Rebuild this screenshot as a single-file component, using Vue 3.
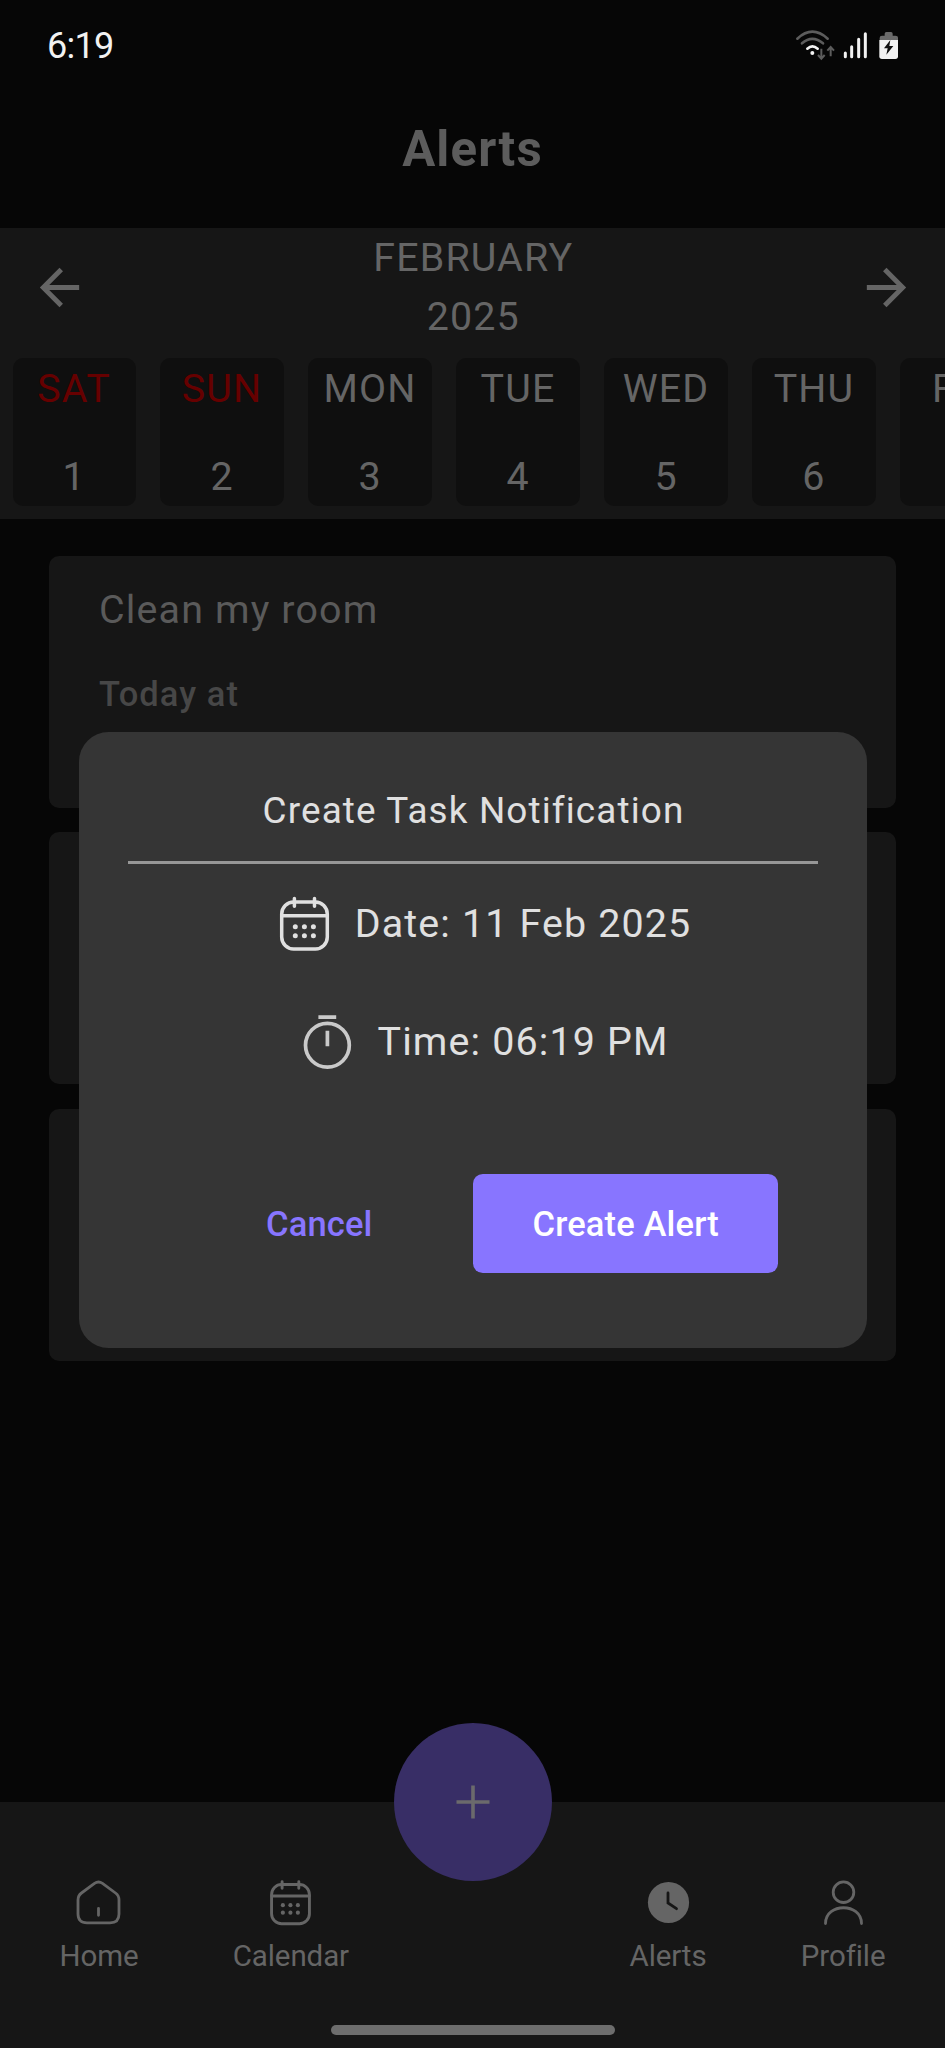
<script setup>
const days = [
  { name: 'SAT', num: 1, weekend: true },
  { name: 'SUN', num: 2, weekend: true },
  { name: 'MON', num: 3 },
  { name: 'TUE', num: 4 },
  { name: 'WED', num: 5 },
  { name: 'THU', num: 6 },
  { name: 'FRI', num: 7 },
]
const tasks = [{ title: 'Clean my room', when: 'Today at' }, {}, {}]
</script>

<template>
  <div class="screen">
    <header class="status">
      <span class="clock">6:19</span>
      <svg class="status-icons" viewBox="0 0 420 180" fill="none">
        <g stroke-linecap="round" stroke-width="8">
          <path d="M52 71Q97 29 143 71" stroke="#5c5c5c" />
          <path d="M66 85Q97 58 129 85" stroke="#5c5c5c" />
          <path d="M82 101Q97 87 113 101" stroke="#f2f2f2" />
        </g>
        <circle cx="97" cy="114" r="6" fill="#f2f2f2" />
        <path d="M124 101V129M114 120L124 131L134 120M152 124V97M142 107L152 96L162 107" stroke="#5c5c5c" stroke-width="6" />
        <path d="M196 114V125M215 95V125M236 73V125M256 56V125" stroke="#f2f2f2" stroke-width="9" stroke-linecap="round" />
        <path d="M299 75V69Q299 62 306 62H314V56Q314 51 319 51H333Q338 51 338 56V62H346Q354 62 354 69V75Z" fill="#6a6a6a" />
        <path d="M298 75H354V124Q354 132 346 132H306Q298 132 298 124Z" fill="#f2f2f2" />
        <path d="M331 75L312 100H323L319 119L340 93H328Z" fill="#111" />
      </svg>
    </header>
    <h1 class="title">Alerts</h1>

    <section class="calendar">
      <div class="month-row">
        <svg class="arrow" viewBox="0 0 24 24"><path d="M20 11H7.83l5.59-5.59L12 4l-8 8 8 8 1.41-1.41L7.83 13H20v-2z" /></svg>
        <div class="month"><div>FEBRUARY</div><div>2025</div></div>
        <svg class="arrow" viewBox="0 0 24 24"><path d="M12 4l-1.41 1.41L16.17 11H4v2h12.17l-5.58 5.59L12 20l8-8z" /></svg>
      </div>
      <div class="days">
        <div v-for="d in days" :key="d.num" class="day">
          <span class="day-name" :class="{ weekend: d.weekend }">{{ d.name }}</span>
          <span>{{ d.num }}</span>
        </div>
      </div>
    </section>

    <main class="tasks">
      <article v-for="(t, i) in tasks" :key="i" class="task">
        <div class="task-title">{{ t.title }}</div>
        <div class="task-when">{{ t.when }}</div>
      </article>
    </main>

    <nav class="nav">
      <div class="item">
        <svg class="icon" viewBox="0 0 49 49">
          <path d="M4 22Q4 17.5 7.5 15L20.5 5.3Q24.5 2.7 28.5 5.3L41.5 15Q45 17.5 45 22V36Q45 44.8 36 44.8H13Q4 44.8 4 36ZM24.5 30.3V37.3" />
        </svg>
        <span>Home</span>
      </div>
      <div class="item">
        <svg class="icon cal" viewBox="0 0 59 59">
          <rect x="6.7" y="7.9" width="45.6" height="47.1" rx="12" />
          <path d="M7 21.7H52M19.4 4.6V12.3M39.5 4.6V12.3" />
          <g class="dots">
            <circle cx="20.3" cy="32.7" r="2.5" /><circle cx="29.4" cy="32.7" r="2.5" /><circle cx="38.4" cy="32.7" r="2.5" />
            <circle cx="20.3" cy="41.7" r="2.5" /><circle cx="29.4" cy="41.7" r="2.5" /><circle cx="38.4" cy="41.7" r="2.5" />
          </g>
        </svg>
        <span>Calendar</span>
      </div>
      <div class="spacer"></div>
      <div class="item">
        <svg class="icon" viewBox="0 0 49 49">
          <circle class="disc" cx="24.5" cy="24.5" r="20.6" />
          <path class="hands" d="M24 15V25L32.5 30.7" />
        </svg>
        <span>Alerts</span>
      </div>
      <div class="item">
        <svg class="icon" viewBox="0 0 49 49">
          <circle cx="24.5" cy="14.2" r="10.3" />
          <path d="M6.5 45.5C6.5 24.5 42.5 24.5 42.5 45.5" />
        </svg>
        <span>Profile</span>
      </div>
      <button class="fab">
        <svg viewBox="0 0 34 34"><path d="M17 .5V33.5M.5 17H33.5" /></svg>
      </button>
      <div class="handle"></div>
    </nav>

    <div class="dialog">
      <h2>Create Task Notification</h2>
      <div class="rule"></div>
      <div class="field">
        <svg class="icon cal" viewBox="0 0 59 59">
          <rect x="6.7" y="7.9" width="45.6" height="47.1" rx="12" />
          <path d="M7 21.7H52M19.4 4.6V12.3M39.5 4.6V12.3" />
          <g class="dots">
            <circle cx="20.3" cy="32.7" r="2.5" /><circle cx="29.4" cy="32.7" r="2.5" /><circle cx="38.4" cy="32.7" r="2.5" />
            <circle cx="20.3" cy="41.7" r="2.5" /><circle cx="29.4" cy="41.7" r="2.5" /><circle cx="38.4" cy="41.7" r="2.5" />
          </g>
        </svg>
        <span>Date: 11 Feb 2025</span>
      </div>
      <div class="field time">
        <svg class="icon timer" viewBox="0 0 59 59">
          <circle cx="29.4" cy="33.2" r="21.9" />
          <path d="M20.4 5.1H38.2M29.4 18.8V34.2" />
        </svg>
        <span>Time: 06:19 PM</span>
      </div>
      <div class="actions">
        <button class="cancel">Cancel</button>
        <button class="create">Create Alert</button>
      </div>
    </div>
  </div>
</template>

<style>
body { background: #060606; }
</style>

<style scoped>
.screen {
  position: relative;
  display: flex;
  flex-direction: column;
  width: 945px;
  height: 2048px;
  overflow: hidden;
  background: #060606;
  color: #656565;
  font-family: Roboto, "Liberation Sans", sans-serif;
  font-size: 39.4px;
  line-height: 59px;
  letter-spacing: 1.15px;
}
button { border: 0; padding: 0; font: inherit; letter-spacing: inherit; background: none; }
.status {
  display: flex;
  align-items: center;
  justify-content: space-between;
  height: 90px;
  padding: 0 25px 0 47px;
}
.clock { font-size: 36px; letter-spacing: -0.7px; color: #f2f2f2; padding-top: 2px; }
.status-icons { width: 140px; height: 60px; }
.title {
  margin: 2px 0 22px;
  font-size: 49.2px;
  line-height: 114px;
  font-weight: 700;
  text-align: center;
  color: #5c5c5c;
}
.calendar { height: 290.5px; background: #161616; }
.month-row {
  display: flex;
  align-items: center;
  justify-content: space-between;
  padding: 0 29px 0 29.5px;
}
.month { text-align: center; padding-left: 1px; }
.arrow { width: 59px; height: 59px; fill: #656565; }
.days { display: flex; gap: 24.8px; padding: 12px 12.5px; }
.day {
  flex: 0 0 123.2px;
  height: 148px;
  display: flex;
  flex-direction: column;
  justify-content: space-between;
  align-items: center;
  border-radius: 10px;
  background: #0f0f0f;
}
.day-name { padding-top: 1px; }
.weekend { color: #660000; }
.tasks {
  flex: 1;
  display: flex;
  flex-direction: column;
  gap: 24.7px;
  padding: 37px 49px;
}
.task {
  box-sizing: border-box;
  height: 252px;
  padding: 24.5px 50px;
  border-radius: 10px;
  background: #161616;
}
.task-title { color: #5a5a5a; }
.task-when { margin-top: 31px; font-size: 34.5px; line-height: 49px; font-weight: 500; color: #474747; letter-spacing: 1.05px; }
.nav {
  position: relative;
  box-sizing: border-box;
  display: flex;
  justify-content: space-between;
  height: 246.5px;
  padding: 76px 59.5px 0;
  background: #161616;
  font-size: 29.5px;
  line-height: 39px;
  letter-spacing: -0.1px;
}
.item { display: flex; flex-direction: column; align-items: center; gap: 10px; }
.spacer { width: 92px; }
.icon { width: 49px; height: 49px; fill: none; stroke: #656565; stroke-width: 2.8; stroke-linecap: round; }
.cal { stroke-width: 3.5; }
.dots { fill: #656565; stroke: none; }
.disc { fill: #656565; stroke: none; }
.hands { stroke: #161616; }
.fab {
  position: absolute;
  left: 393.5px;
  top: -78.5px;
  width: 158px;
  height: 158px;
  display: grid;
  place-items: center;
  border-radius: 50%;
  background: #382e66;
}
.fab svg { width: 34px; height: 34px; fill: none; stroke: #6b6a6c; stroke-width: 3.6; }
.handle {
  position: absolute;
  left: 331px;
  bottom: 13px;
  width: 283.5px;
  height: 10px;
  border-radius: 5px;
  background: #6d6d6d;
}
.dialog {
  position: absolute;
  left: 79px;
  top: 732px;
  width: 787.5px;
  height: 615.5px;
  box-sizing: border-box;
  padding: 49px 49px 0;
  border-radius: 29.5px;
  background: #353535;
  color: #e0e0e0;
}
.dialog h2 { margin: 0; padding-left: 1.5px; font-size: 36.9px; font-weight: 400; letter-spacing: 1.13px; text-align: center; }
.rule { height: 3px; margin-top: 21px; background: #979797; }
.field {
  display: flex;
  justify-content: center;
  align-items: center;
  gap: 20.5px;
  height: 59px;
  margin-top: 29.5px;
  padding-left: 21px;
}
.field.time { margin-top: 59px; }
.dialog .icon { width: 59px; height: 59px; stroke: #e0e0e0; }
.dialog .dots { fill: #e0e0e0; }
.dialog .timer { stroke: #cacaca; stroke-width: 3.7; stroke-linecap: butt; }
.actions {
  display: flex;
  justify-content: flex-end;
  gap: 100px;
  margin-top: 103.5px;
  padding-right: 39.5px;
  font-size: 34.5px;
  font-weight: 500;
  letter-spacing: 0.15px;
}
.cancel { padding-top: 1px; color: #8875ff; }
.create { width: 305.5px; height: 99px; padding: 1px 0 0 1px; border-radius: 9.8px; background: #8875ff; color: #fff; }
</style>
